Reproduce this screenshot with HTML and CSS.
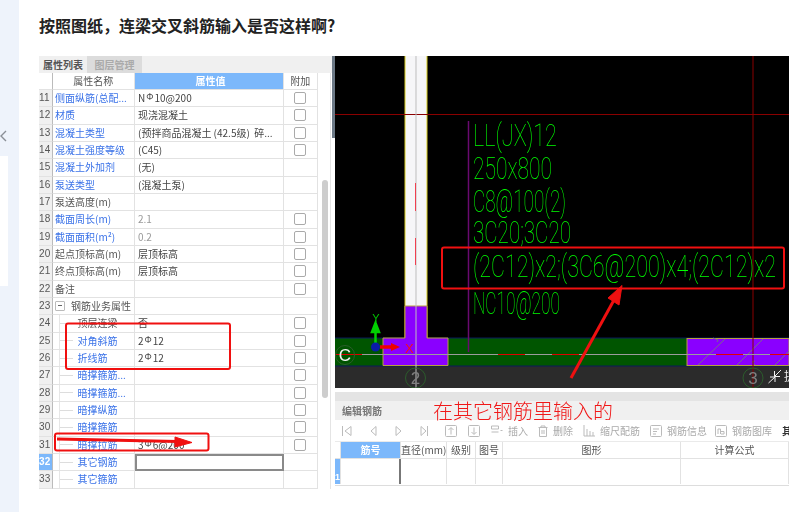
FILE: index.html
```html
<!DOCTYPE html>
<html lang="zh-CN">
<head>
    <meta charset="UTF-8">
    <title>连梁交叉斜筋</title>
    <link rel="stylesheet" href="styles.css">
</head>
<body>
<aside class="side">
    <svg class="side-arrow" width="8" height="14" viewBox="0 0 8 14"><path d="M6 2 1 7l5 5" fill="none" stroke="#8a8f96" stroke-width="1.4"/></svg>
    <div class="side-box"></div>
</aside>

<main class="main">
    <h1 class="title">按照图纸，连梁交叉斜筋输入是否这样啊?</h1>

    <div class="shot">
        <section class="props">
            <div class="tabs">
                <span class="tab tab-on">属性列表</span>
                <span class="tab">图层管理</span>
            </div>
            <div class="props-body">
                <div class="sheet">
                    <div class="row head"><span class="num"></span><span class="name">属性名称</span><span class="val">属性值</span><span class="add">附加</span></div>
                    <div class="row"><span class="num">11</span><span class="name link">侧面纵筋(总配...</span><span class="val">N<sup>Φ</sup>10@200</span><span class="add"><i class="box"></i></span></div>
                    <div class="row"><span class="num">12</span><span class="name link">材质</span><span class="val">现浇混凝土</span><span class="add"><i class="box"></i></span></div>
                    <div class="row"><span class="num">13</span><span class="name link">混凝土类型</span><span class="val">(预拌商品混凝土 (42.5级)&nbsp; 碎...</span><span class="add"><i class="box"></i></span></div>
                    <div class="row"><span class="num">14</span><span class="name link">混凝土强度等级</span><span class="val">(C45)</span><span class="add"><i class="box"></i></span></div>
                    <div class="row"><span class="num">15</span><span class="name link">混凝土外加剂</span><span class="val">(无)</span><span class="add"></span></div>
                    <div class="row"><span class="num">16</span><span class="name link">泵送类型</span><span class="val">(混凝土泵)</span><span class="add"></span></div>
                    <div class="row"><span class="num">17</span><span class="name">泵送高度(m)</span><span class="val"></span><span class="add"></span></div>
                    <div class="row"><span class="num">18</span><span class="name link">截面周长(m)</span><span class="val muted">2.1</span><span class="add"><i class="box"></i></span></div>
                    <div class="row"><span class="num">19</span><span class="name link">截面面积(m²)</span><span class="val muted">0.2</span><span class="add"><i class="box"></i></span></div>
                    <div class="row"><span class="num">20</span><span class="name">起点顶标高(m)</span><span class="val">层顶标高</span><span class="add"><i class="box"></i></span></div>
                    <div class="row"><span class="num">21</span><span class="name">终点顶标高(m)</span><span class="val">层顶标高</span><span class="add"><i class="box"></i></span></div>
                    <div class="row"><span class="num">22</span><span class="name">备注</span><span class="val"></span><span class="add"><i class="box"></i></span></div>
                    <div class="row"><span class="num">23</span><span class="name"><i class="minus"></i>钢筋业务属性</span><span class="val"></span><span class="add"></span></div>
                    <div class="row"><span class="num">24</span><span class="name"><i class="branch"></i>顶层连梁</span><span class="val">否</span><span class="add"><i class="box"></i></span></div>
                    <div class="row"><span class="num">25</span><span class="name link"><i class="branch"></i>对角斜筋</span><span class="val">2<sup>Φ</sup>12</span><span class="add"><i class="box"></i></span></div>
                    <div class="row"><span class="num">26</span><span class="name link"><i class="branch"></i>折线筋</span><span class="val">2<sup>Φ</sup>12</span><span class="add"><i class="box"></i></span></div>
                    <div class="row"><span class="num">27</span><span class="name link"><i class="branch"></i>暗撑箍筋...</span><span class="val"></span><span class="add"><i class="box"></i></span></div>
                    <div class="row"><span class="num">28</span><span class="name link"><i class="branch"></i>暗撑箍筋...</span><span class="val"></span><span class="add"><i class="box"></i></span></div>
                    <div class="row"><span class="num">29</span><span class="name link"><i class="branch"></i>暗撑纵筋</span><span class="val"></span><span class="add"><i class="box"></i></span></div>
                    <div class="row"><span class="num">30</span><span class="name link"><i class="branch"></i>暗撑箍筋</span><span class="val"></span><span class="add"><i class="box"></i></span></div>
                    <div class="row"><span class="num">31</span><span class="name link"><i class="branch"></i>暗撑拉筋</span><span class="val">3<sup>Φ</sup>6@200</span><span class="add"><i class="box"></i></span></div>
                    <div class="row"><span class="num num-on">32</span><span class="name link"><i class="branch"></i>其它钢筋</span><span class="val val-edit"></span><span class="add"></span></div>
                    <div class="row"><span class="num">33</span><span class="name link"><i class="branch"></i>其它箍筋</span><span class="val"></span><span class="add"></span></div>
                </div>
                <div class="scroll"><div class="thumb"></div></div>
            </div>
        </section>

        <div class="gutter"><div class="gutter-top"></div></div>

        <section class="right">
            <!-- viewBox uses the same numbers as the page, easier to measure -->
            <svg class="cad" width="454" height="332" viewBox="335 56 454 332">
                <rect x="335" y="56" width="454" height="332" fill="#000"/>
                <rect x="335" y="366" width="454" height="22" fill="#2b2b2b"/>
                <rect x="335" y="338" width="352" height="28" fill="#005500"/>
                <path d="M335 338H789M335 366H789" stroke="#0a1a5a" stroke-width="1"/>

                <rect x="405" y="56" width="22" height="250" fill="#f6f6f8"/>
                <path d="M405 56V338M427 56V338" stroke="#d8cc20" stroke-width="1"/>
                <path d="M405 306H427V338H448V365.500H383V338H405Z" fill="#8a00ff" stroke="#b8a040" stroke-width="1"/>
                <rect x="687" y="338.500" width="102" height="27" fill="#8a00ff" stroke="#b8a040" stroke-width="1"/>
                <path d="M698 365 725 339M737 365 763 339M775 365 789 351M713 338l5 2 -1 2M755 365l-3-3 3-1" fill="none" stroke="#7a6a8a" stroke-width="1"/>

                <path d="M335 114.500H789" stroke="#8a0000" stroke-width="1"/>
                <path d="M753 56V388" stroke="#8a0000" stroke-width="1"/>
                <path d="M416 56V388" stroke="#bdbdbd" stroke-width="1"/>
                <path d="M468.500 121V352" stroke="#6a0a70" stroke-width="1.500"/>
                <path d="M415.500 183V211M415.500 238V265" stroke="#f04050" stroke-width="1"/>
                <path d="M335 354.500H789" stroke="#9c9c9c" stroke-width="1"/>
                <path d="M335 354.500H362M498 354.500H525M552 354.500H579M716 354.500H743M770 354.500H789" stroke="#e00000" stroke-width="1"/>

                <g class="cad-text">
                    <text x="473" y="146" textLength="84" lengthAdjust="spacingAndGlyphs">LL(JX)12</text>
                    <text x="473" y="179" textLength="79" lengthAdjust="spacingAndGlyphs">250x800</text>
                    <text x="473" y="212" textLength="93" lengthAdjust="spacingAndGlyphs">C8@100(2)</text>
                    <text x="473" y="243" textLength="98" lengthAdjust="spacingAndGlyphs">3C20;3C20</text>
                    <text x="473" y="277" textLength="303" lengthAdjust="spacingAndGlyphs">(2C12)x2;(3C6@200)x4;(2C12)x2</text>
                    <text x="473" y="314" textLength="87" lengthAdjust="spacingAndGlyphs">NC10@200</text>
                </g>

                <g fill="none" stroke="#2c5c2c" stroke-width="1">
                    <circle cx="345" cy="355" r="9.500"/>
                    <circle cx="415.500" cy="378" r="10"/>
                    <circle cx="753" cy="378" r="10"/>
                </g>
                <text class="axis-c" x="345" y="361">C</text>
                <text class="axis-n" x="415.500" y="384">2</text>
                <text class="axis-n" x="753" y="384">3</text>

                <path d="M375.500 343V331M372 332l3.500-9 3.500 9Z" fill="#00d000" stroke="#00d000" stroke-width="2.500"/>
                <text class="axis-y" x="376" y="322">Y</text>
                <path d="M380 347H392" stroke="#ee0000" stroke-width="3.500"/>
                <path d="M391 343l9 4-9 4Z" fill="#ee0000"/>
                <circle cx="375.500" cy="347" r="4.500" fill="#0a1aa8"/>
                <text class="axis-x" x="405" y="353">X</text>

                <path d="M781 370 774.500 376.500M774.500 371V376.500H780M768.500 383 775 377M770 377H775V382" fill="none" stroke="#f0f0f0" stroke-width="1"/>
                <text class="cad-btn" x="784" y="381">提</text>
            </svg>

            <div class="edit">
                <div class="edit-bar"></div>
                <div class="edit-head">
                    <span class="edit-title">编辑钢筋</span>
                    <span class="note">在其它钢筋里输入的</span>
                </div>
                <div class="tools">
                    <svg class="ico" width="10" height="12" viewBox="0 0 10 12"><path d="M.5 1v10M9 1.500 3 6l6 4.500Z"/></svg>
                    <svg class="ico gap-b" width="7" height="12" viewBox="0 0 7 12"><path d="M6 1.500 1 6l5 4.500Z"/></svg>
                    <svg class="ico gap-b" width="7" height="12" viewBox="0 0 7 12"><path d="M1 1.500 6 6l-5 4.500Z"/></svg>
                    <svg class="ico gap-b" width="8" height="12" viewBox="0 0 8 12"><path d="M7.500 1v10M1 1.500 6 6l-5 4.500Z"/></svg>
                    <svg class="ico gap-c" width="12" height="12" viewBox="0 0 12 12"><rect x=".5" y=".5" width="11" height="11" rx="1"/><path d="M6 9.500V3M3.500 5 6 2.500 8.500 5"/></svg>
                    <svg class="ico gap-d" width="12" height="12" viewBox="0 0 12 12"><rect x=".5" y=".5" width="11" height="11" rx="1"/><path d="M6 2.500V9M3.500 7 6 9.500 8.500 7"/></svg>
                    <span class="tool gap-d"><svg class="ico" width="12" height="11" viewBox="0 0 12 11"><path d="M.5 1h7v3h-7ZM.5 7h7M9.500 5.500h2"/></svg>插入</span>
                    <span class="tool gap-e"><svg class="ico" width="10" height="12" viewBox="0 0 10 12"><path d="M.5 2.500h9M3 2.500V1h4v1.500M1.500 2.500v9h7v-9M4 5v4M6 5v4"/></svg>删除</span>
                    <span class="tool gap-e"><svg class="ico" width="12" height="12" viewBox="0 0 12 12"><path d="M1 0v11h11M4 4v7M7 6v5M10 7v4"/></svg>缩尺配筋</span>
                    <span class="tool gap-e"><svg class="ico" width="12" height="12" viewBox="0 0 12 12"><rect x=".5" y=".5" width="11" height="11" rx="1"/><path d="M3 4h6M3 6.500h4M3 9h3"/></svg>钢筋信息</span>
                    <span class="tool gap-f"><svg class="ico" width="12" height="12" viewBox="0 0 12 12"><rect x=".5" y=".5" width="11" height="11" rx="1"/><path d="M3 9V4h2.500v5M6 9h3V6.500H6"/></svg>钢筋图库</span>
                    <span class="tool tool-cut gap-e">其</span>
                </div>
                <div class="bars">
                    <div class="bars-row bars-head">
                        <span></span><span class="bar-no">筋号</span><span>直径(mm)</span><span>级别</span><span>图号</span><span>图形</span><span>计算公式</span>
                    </div>
                    <div class="bars-row bars-data">
                        <span class="bar-idx">1</span><span class="bar-cur"></span><span></span><span></span><span></span><span></span><span></span>
                    </div>
                </div>
            </div>
        </section>

        <!-- red marks somebody drew on top of the screenshot -->
        <svg class="marks" width="750" height="430" viewBox="39 56 750 430">
            <rect x="66" y="323.500" width="164" height="45.500" rx="2"/>
            <rect x="55" y="433.500" width="153.500" height="17" rx="2"/>
            <rect x="442" y="247.500" width="342" height="41" rx="2"/>
            <path class="thick" d="M57 439 178 441.500"/>
            <path class="head-fill" d="M175 437 192 442.500 175 447Z"/>
            <path class="thick" d="M571 378 614 300"/>
            <path class="head-fill" d="M622 285.500 619 305 608 298Z"/>
        </svg>
    </div>
</main>
</body>
</html>
```

FILE: styles.css
```css
* {
    box-sizing: border-box;
}

body {
    margin: 0;
    display: flex;
    min-height: 100vh;
    overflow: hidden;
    background: #fff;
    font-family: "Noto Sans CJK SC", "Liberation Sans", sans-serif;
    color: #333;
}

.side {
    width: 19px;
    flex: none;
    padding-top: 129px;
    background: #eef3fb;
}

.side-arrow {
    display: block;
    height: 14px;
    margin-bottom: 13px;
}

.side-box {
    width: 8px;
    height: 130px;
    background: #fff;
}

.main {
    flex: 1;
    padding-left: 20px;
}

.title {
    margin: 0;
    height: 56px;
    padding-top: 13px;
    font-size: 16px;
    line-height: 24px;
    font-weight: 700;
    color: #222;
}

.shot {
    position: relative;
    display: flex;
    width: 750px;
    height: 430px;
    filter: blur(0.35px);
}

/* left panel */
.props {
    width: 293px;
    flex: none;
    font-size: 10px;
}

.tabs {
    display: flex;
    height: 17px;
    background: #f0f0f0;
}

.tab {
    width: 55px;
    text-align: center;
    line-height: 17px;
    background: #dcdcdc;
    color: #aaa;
    font-weight: 700;
}

.tab-on {
    width: 48px;
    background: #f0f0f0;
    color: #555;
}

.props-body {
    display: flex;
}

.sheet {
    width: 279px;
}

.row {
    display: grid;
    grid-template-columns: 13.5px 82.5px 149px 33.5px;
    height: 17.33px;
    line-height: 16px;
    white-space: nowrap;
}

.row > span {
    border-right: 1px solid #e2e2e2;
    border-bottom: 1px solid #e2e2e2;
    overflow: hidden;
}

.row .num {
    background: #f0f0f0;
    border-right: 1px solid #bbb;
    font-size: 10px;
    font-family: "Liberation Sans", sans-serif;
    letter-spacing: .3px;
    color: #555;
}

.row .num-on {
    background: #7cb8fb;
    color: #fff;
    font-weight: 700;
}

.name {
    display: flex;
    align-items: center;
    padding-left: 2.500px;
    color: #555;
}

.link {
    color: #3a72e8;
}

.val {
    padding-left: 3px;
    color: #444;
}

.val sup {
    font-size: 9px;
    line-height: 0;
    vertical-align: 2px;
    margin: 0 1px;
}

.muted {
    color: #999;
}

.val-edit {
    border: 2px solid #8a8a8a !important;
}

.add {
    display: flex;
    align-items: center;
    justify-content: center;
}

.box {
    width: 12px;
    height: 12px;
    border: 1px solid #aaa;
    border-radius: 2px;
}

.minus {
    position: relative;
    width: 10px;
    height: 10px;
    margin: 0 6px 0 0;
    border: 1px solid #bbb;
    border-radius: 1px;
}

.minus::after {
    content: "";
    position: absolute;
    left: 2px;
    top: 3px;
    width: 4px;
    height: 1px;
    background: #666;
}

.branch {
    position: relative;
    width: 13px;
    height: 1px;
    margin: 0 4.500px 0 5px;
    background: #ddd;
}

.branch::before {
    content: "";
    position: absolute;
    left: -1px;
    top: -9px;
    width: 1px;
    height: 18px;
    background: #e6e6e6;
}

.head {
    height: 17px;
}

.head .num {
    background: #fff;
}

.head .name {
    justify-content: center;
    padding: 0;
}

.head .val {
    background: #7cb8fb;
    color: #fff;
    text-align: center;
    font-weight: 700;
}

.head .add {
    color: #555;
}

.scroll {
    width: 13px;
    padding: 107px 0 0 4px;
    border-right: 1px solid #e4e4e4;
}

.thumb {
    width: 6px;
    height: 218px;
    border-radius: 3px;
    background: #cdcdcd;
}

.gutter {
    width: 3px;
    flex: none;
}

.gutter-top {
    height: 82px;
    background: #6b7885;
}

/* right panel */
.right {
    width: 454px;
    flex: none;
    overflow: hidden;
}

.cad {
    display: block;
}

.cad-text {
    font-family: Roboto, "Liberation Mono", monospace;
    font-size: 31px;
    font-weight: 100;
    fill: #00ff00;
}

.axis-c {
    font-family: "Liberation Sans", sans-serif;
    font-size: 17px;
    fill: #f4f4f4;
    text-anchor: middle;
}

.axis-n {
    font-family: "Liberation Sans", sans-serif;
    font-size: 17px;
    fill: #808080;
    text-anchor: middle;
}

.axis-y {
    font-family: "Liberation Sans", sans-serif;
    font-size: 11px;
    fill: #00c000;
    text-anchor: middle;
}

.axis-x {
    font-family: "Liberation Sans", sans-serif;
    font-size: 13px;
    fill: #ee1020;
}

.cad-btn {
    font-size: 12px;
    fill: #eee;
}

.edit {
    margin-top: 4px;
    font-size: 10px;
}

.edit-bar {
    height: 9px;
    background: #e4e4e4;
}

.edit-head {
    display: flex;
    height: 19px;
    align-items: center;
    background: #f0f0f0;
    padding-left: 7px;
}

.edit-title {
    width: 91px;
    font-weight: 700;
    color: #777;
}

.note {
    font-size: 20px;
    line-height: 19px;
    font-weight: 300;
    color: #f01818;
    white-space: nowrap;
}

.tools {
    display: flex;
    align-items: center;
    height: 22px;
    padding-left: 7px;
    color: #aaa;
    border-bottom: 1px solid #eaeaea;
}

.ico {
    flex: none;
    fill: none;
    stroke: #bbb;
    stroke-width: 1;
}

.tool {
    display: flex;
    align-items: center;
    white-space: nowrap;
}

.tool .ico {
    margin-right: 5px;
}

.tool-cut {
    color: #333;
    font-weight: 700;
}

.gap-b {
    margin-left: 18px;
}

.gap-c {
    margin-left: 17px;
}

.gap-d {
    margin-left: 11px;
}

.gap-e {
    margin-left: 10px;
}

.gap-f {
    margin-left: 8px;
}

.bars {
    border-bottom: 1px solid #ddd;
    padding-bottom: 1px;
}

.bars-row {
    display: grid;
    grid-template-columns: 6px 60px 46px 29px 27px 178px 108px;
}

.bars-row > span {
    border-right: 1px solid #e2e2e2;
    text-align: center;
    white-space: nowrap;
}

.bars-head {
    height: 17px;
    line-height: 16px;
    border-bottom: 1px solid #e2e2e2;
    color: #555;
}

.bars-head .bar-no {
    background: #7cb8fb;
    color: #fff;
    font-weight: 700;
}

.bars-data {
    height: 25px;
}

.bars-data .bar-idx {
    background: #7cb8fb;
    color: #fff;
    font-family: "Liberation Sans", sans-serif;
    font-weight: 700;
    font-size: 9px;
    line-height: 36px;
    overflow: hidden;
}

.bars-data .bar-cur {
    border-right: 2px solid #777;
}

/* red pen over the picture */
.marks {
    position: absolute;
    left: 0;
    top: 0;
    pointer-events: none;
    fill: none;
    stroke: #f01010;
    stroke-width: 2;
}

.marks .thick {
    stroke-width: 3;
}

.marks .head-fill {
    fill: #f01010;
    stroke-width: 1;
}
```
